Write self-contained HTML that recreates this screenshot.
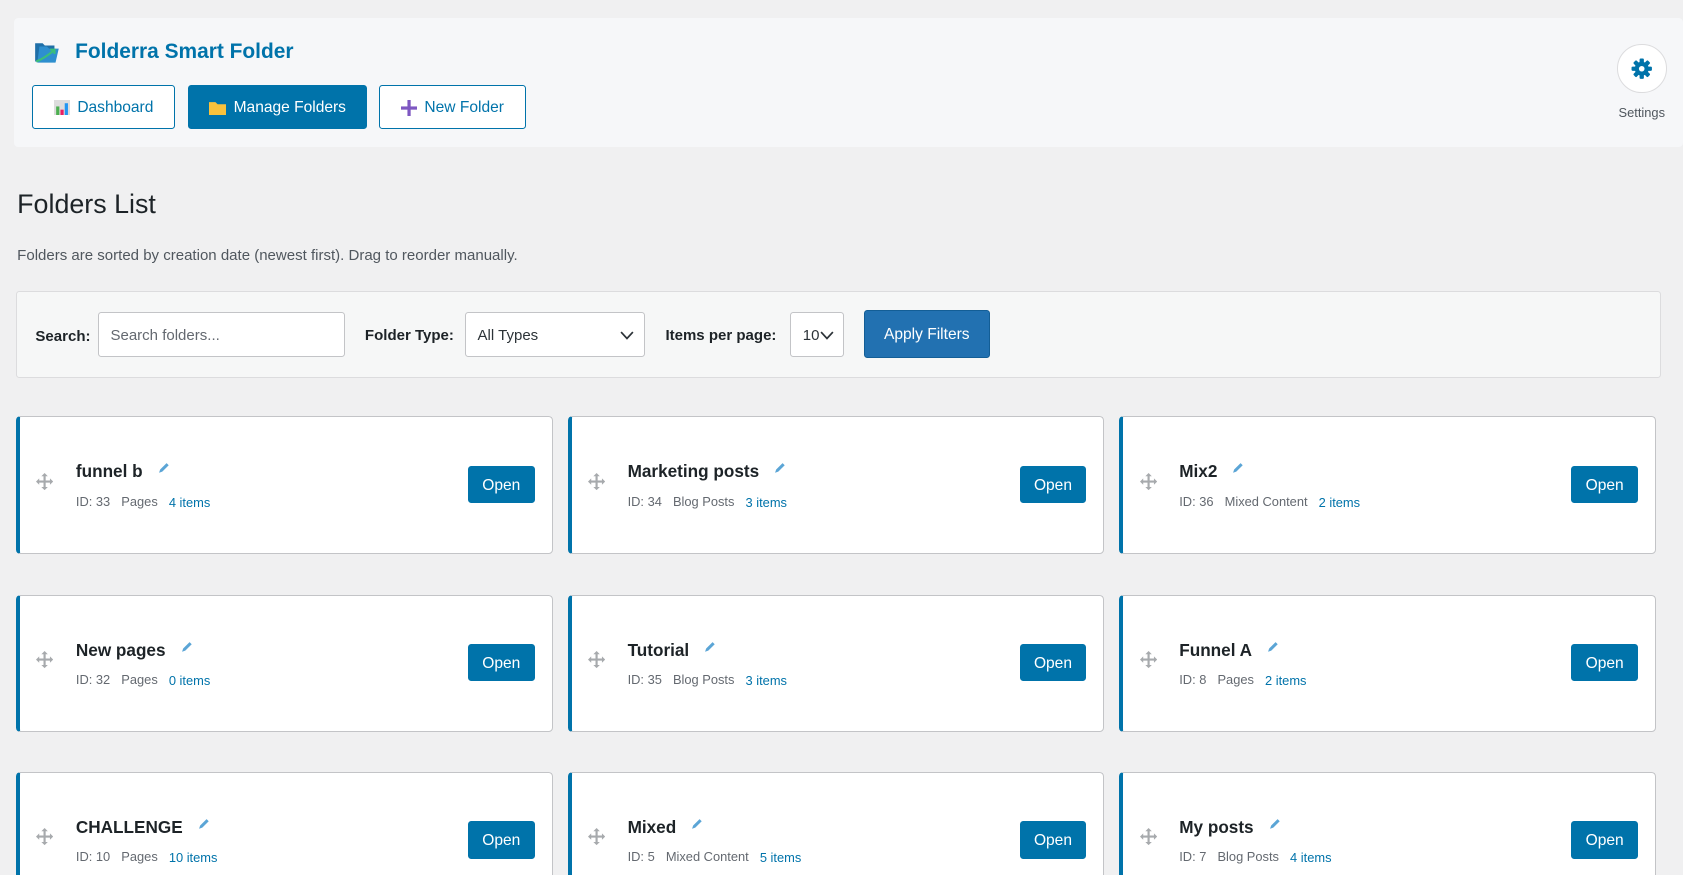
<!DOCTYPE html>
<html><head><meta charset="utf-8"><style>
html,body{margin:0;padding:0;background:#f0f0f1;overflow:hidden}
body{zoom:1.0733;width:1568px;height:815px;position:relative;font-family:"Liberation Sans",sans-serif;color:#1d2327}
.a{position:absolute}
.hdr{left:13px;top:17px;width:1555px;height:120px;background:#f6f7f9;border-radius:4px}
.title{left:70px;top:37px;font-size:19.5px;color:#0073aa;font-weight:bold}
.btn{position:absolute;top:79px;height:41px;box-sizing:border-box;border:1px solid #0073aa;border-radius:3px;background:#fff;color:#0073aa;font-size:14.5px;display:flex;align-items:center;justify-content:center;gap:7px;padding-top:2px}
.btn.p{background:#0073aa;color:#fff}
.set{left:1507px;top:41px;width:46px;height:46px;border-radius:50%;background:#fff;border:1px solid #dcdcde;box-sizing:border-box;display:flex;align-items:center;justify-content:center}
h1{position:absolute;left:16px;top:176px;margin:0;font-size:25px;font-weight:normal}
.sub{left:16px;top:230px;font-size:14px;color:#50575e}
.flt{left:15px;top:271px;width:1533px;height:81px;box-sizing:border-box;background:#f6f7f7;border:1px solid #dcdcde;border-radius:3px}
.lbl{position:absolute;top:306px;font-size:14px;font-weight:bold}
.inp{position:absolute;top:291px;height:42px;box-sizing:border-box;border:1px solid #c3c4c7;border-radius:3px;background:#fff;font-size:14px;color:#50575e;padding-left:11px;line-height:42px}
.chev{position:absolute;right:9px;top:16px}
.apply{left:805px;top:289px;width:117px;height:45px;background:#2271b1;border:1px solid #135e96;box-sizing:border-box;border-radius:3px;color:#fff;font-size:14.5px;display:flex;align-items:center;justify-content:center;padding-top:2px}
.card{position:absolute;width:500px;height:128px;box-sizing:border-box;background:#fff;border:1px solid #c3c4c7;border-left:4px solid #0073aa;border-radius:4px}
.card .nm{position:absolute;left:52px;top:41px;font-size:16px;font-weight:bold}
.card .pen{margin-left:14px;vertical-align:3px}
.card .meta{position:absolute;left:52px;top:71px;font-size:12px;color:#646970}
.card .meta span{margin-right:7px}
.card .meta .it{color:#0073aa;position:relative;top:1px}
.card .mv{position:absolute;left:15px;top:52px}
.card .op{position:absolute;right:16px;top:45px;width:62px;height:35px;background:#0073aa;border-radius:3px;color:#fff;font-size:14.5px;display:flex;align-items:center;justify-content:center;padding-top:2px;box-sizing:border-box}
</style></head><body>
<div class="a hdr"></div>
<svg class="a" style="left:31px;top:36px" width="26" height="25" viewBox="0 0 26 25"><path d="M2 4h7l2 2h9v15H2z" fill="#1f6fa8"/><path d="M6 7h7l2 2h9l-3 13H4z" fill="#2e8fcf"/><path d="M3 21 C8 19 13 16 19 11" stroke="#3bbf7a" stroke-width="2" fill="none"/><path d="M16 10h4v4" stroke="#3bbf7a" stroke-width="2" fill="none"/></svg>
<div class="a title">Folderra Smart Folder</div>
<div class="btn" style="left:30px;width:133px"><svg width="15" height="14"><rect x="0" y="0" width="15" height="14" fill="#ddd"/><rect x="2" y="6" width="3" height="8" fill="#4caf50"/><rect x="6" y="9" width="3" height="5" fill="#e91e63"/><rect x="10" y="3" width="3" height="11" fill="#2196f3"/></svg>Dashboard</div>
<div class="btn p" style="left:175px;width:167px"><svg width="16" height="13"><path d="M0 1h6l2 2h8v10H0z" fill="#f9c23c"/></svg>Manage Folders</div>
<div class="btn" style="left:353px;width:137px"><svg width="15" height="15"><rect x="6" y="0" width="3" height="15" fill="#7e57c2"/><rect x="0" y="6" width="15" height="3" fill="#7e57c2"/></svg>New Folder</div>
<div class="a set"><svg width="20" height="20" viewBox="0 0 20 20"><g fill="#0073aa"><circle cx="10" cy="10" r="6.5"/><g><rect x="8" y="0.5" width="4" height="5" rx="1"/><rect x="8" y="14.5" width="4" height="5" rx="1"/><rect x="0.5" y="8" width="5" height="4" rx="1"/><rect x="14.5" y="8" width="5" height="4" rx="1"/></g><g transform="rotate(45 10 10)"><rect x="8" y="0.5" width="4" height="5" rx="1"/><rect x="8" y="14.5" width="4" height="5" rx="1"/><rect x="0.5" y="8" width="5" height="4" rx="1"/><rect x="14.5" y="8" width="5" height="4" rx="1"/></g></g><circle cx="10" cy="10" r="2.6" fill="#fff"/></svg></div>
<div class="a" style="left:1508px;top:98px;font-size:12px;color:#50575e">Settings</div>
<h1>Folders List</h1>
<div class="a sub">Folders are sorted by creation date (newest first). Drag to reorder manually.</div>
<div class="a flt"></div>
<div class="lbl" style="left:33px">Search:</div>
<div class="inp" style="left:91px;width:230px;color:#646970">Search folders...</div>
<div class="lbl" style="left:340px;top:305px">Folder Type:</div>
<div class="inp" style="left:433px;width:168px;color:#2c3338">All Types<svg class="chev" width="13" height="9"><path d="M1 1l5.5 6L12 1" stroke="#2c3338" stroke-width="1.6" fill="none"/></svg></div>
<div class="lbl" style="left:620px;top:305px">Items per page:</div>
<div class="inp" style="left:736px;width:50px;color:#2c3338">10<svg class="chev" style="right:8px" width="13" height="9"><path d="M1 1l5.5 6L12 1" stroke="#2c3338" stroke-width="1.6" fill="none"/></svg></div>
<div class="a apply">Apply Filters</div>

<div class="card" style="left:15px;top:388px"><svg class="mv" width="16" height="16" viewBox="0 0 16 16"><path d="M8 0l3 3H9v4h4V5l3 3-3 3V9H9v4h2l-3 3-3-3h2V9H3v2L0 8l3-3v2h4V3H5z" fill="#a7aaad"/></svg><div class="nm">funnel b<svg class="pen" width="11" height="11"><path d="M1 10l1-3 6-6 2 2-6 6z" fill="#5ba5d6"/></svg></div><div class="meta"><span>ID: 33</span> <span>Pages</span> <span class="it">4 items</span></div><div class="op">Open</div></div>
<div class="card" style="left:529px;top:388px"><svg class="mv" width="16" height="16" viewBox="0 0 16 16"><path d="M8 0l3 3H9v4h4V5l3 3-3 3V9H9v4h2l-3 3-3-3h2V9H3v2L0 8l3-3v2h4V3H5z" fill="#a7aaad"/></svg><div class="nm">Marketing posts<svg class="pen" width="11" height="11"><path d="M1 10l1-3 6-6 2 2-6 6z" fill="#5ba5d6"/></svg></div><div class="meta"><span>ID: 34</span> <span>Blog Posts</span> <span class="it">3 items</span></div><div class="op">Open</div></div>
<div class="card" style="left:1043px;top:388px"><svg class="mv" width="16" height="16" viewBox="0 0 16 16"><path d="M8 0l3 3H9v4h4V5l3 3-3 3V9H9v4h2l-3 3-3-3h2V9H3v2L0 8l3-3v2h4V3H5z" fill="#a7aaad"/></svg><div class="nm">Mix2<svg class="pen" width="11" height="11"><path d="M1 10l1-3 6-6 2 2-6 6z" fill="#5ba5d6"/></svg></div><div class="meta"><span>ID: 36</span> <span>Mixed Content</span> <span class="it">2 items</span></div><div class="op">Open</div></div>

<div class="card" style="left:15px;top:554px"><svg class="mv" width="16" height="16" viewBox="0 0 16 16"><path d="M8 0l3 3H9v4h4V5l3 3-3 3V9H9v4h2l-3 3-3-3h2V9H3v2L0 8l3-3v2h4V3H5z" fill="#a7aaad"/></svg><div class="nm">New pages<svg class="pen" width="11" height="11"><path d="M1 10l1-3 6-6 2 2-6 6z" fill="#5ba5d6"/></svg></div><div class="meta"><span>ID: 32</span> <span>Pages</span> <span class="it">0 items</span></div><div class="op">Open</div></div>
<div class="card" style="left:529px;top:554px"><svg class="mv" width="16" height="16" viewBox="0 0 16 16"><path d="M8 0l3 3H9v4h4V5l3 3-3 3V9H9v4h2l-3 3-3-3h2V9H3v2L0 8l3-3v2h4V3H5z" fill="#a7aaad"/></svg><div class="nm">Tutorial<svg class="pen" width="11" height="11"><path d="M1 10l1-3 6-6 2 2-6 6z" fill="#5ba5d6"/></svg></div><div class="meta"><span>ID: 35</span> <span>Blog Posts</span> <span class="it">3 items</span></div><div class="op">Open</div></div>
<div class="card" style="left:1043px;top:554px"><svg class="mv" width="16" height="16" viewBox="0 0 16 16"><path d="M8 0l3 3H9v4h4V5l3 3-3 3V9H9v4h2l-3 3-3-3h2V9H3v2L0 8l3-3v2h4V3H5z" fill="#a7aaad"/></svg><div class="nm">Funnel A<svg class="pen" width="11" height="11"><path d="M1 10l1-3 6-6 2 2-6 6z" fill="#5ba5d6"/></svg></div><div class="meta"><span>ID: 8</span> <span>Pages</span> <span class="it">2 items</span></div><div class="op">Open</div></div>

<div class="card" style="left:15px;top:719px"><svg class="mv" width="16" height="16" viewBox="0 0 16 16"><path d="M8 0l3 3H9v4h4V5l3 3-3 3V9H9v4h2l-3 3-3-3h2V9H3v2L0 8l3-3v2h4V3H5z" fill="#a7aaad"/></svg><div class="nm">CHALLENGE<svg class="pen" width="11" height="11"><path d="M1 10l1-3 6-6 2 2-6 6z" fill="#5ba5d6"/></svg></div><div class="meta"><span>ID: 10</span> <span>Pages</span> <span class="it">10 items</span></div><div class="op">Open</div></div>
<div class="card" style="left:529px;top:719px"><svg class="mv" width="16" height="16" viewBox="0 0 16 16"><path d="M8 0l3 3H9v4h4V5l3 3-3 3V9H9v4h2l-3 3-3-3h2V9H3v2L0 8l3-3v2h4V3H5z" fill="#a7aaad"/></svg><div class="nm">Mixed<svg class="pen" width="11" height="11"><path d="M1 10l1-3 6-6 2 2-6 6z" fill="#5ba5d6"/></svg></div><div class="meta"><span>ID: 5</span> <span>Mixed Content</span> <span class="it">5 items</span></div><div class="op">Open</div></div>
<div class="card" style="left:1043px;top:719px"><svg class="mv" width="16" height="16" viewBox="0 0 16 16"><path d="M8 0l3 3H9v4h4V5l3 3-3 3V9H9v4h2l-3 3-3-3h2V9H3v2L0 8l3-3v2h4V3H5z" fill="#a7aaad"/></svg><div class="nm">My posts<svg class="pen" width="11" height="11"><path d="M1 10l1-3 6-6 2 2-6 6z" fill="#5ba5d6"/></svg></div><div class="meta"><span>ID: 7</span> <span>Blog Posts</span> <span class="it">4 items</span></div><div class="op">Open</div></div>
</body></html>
